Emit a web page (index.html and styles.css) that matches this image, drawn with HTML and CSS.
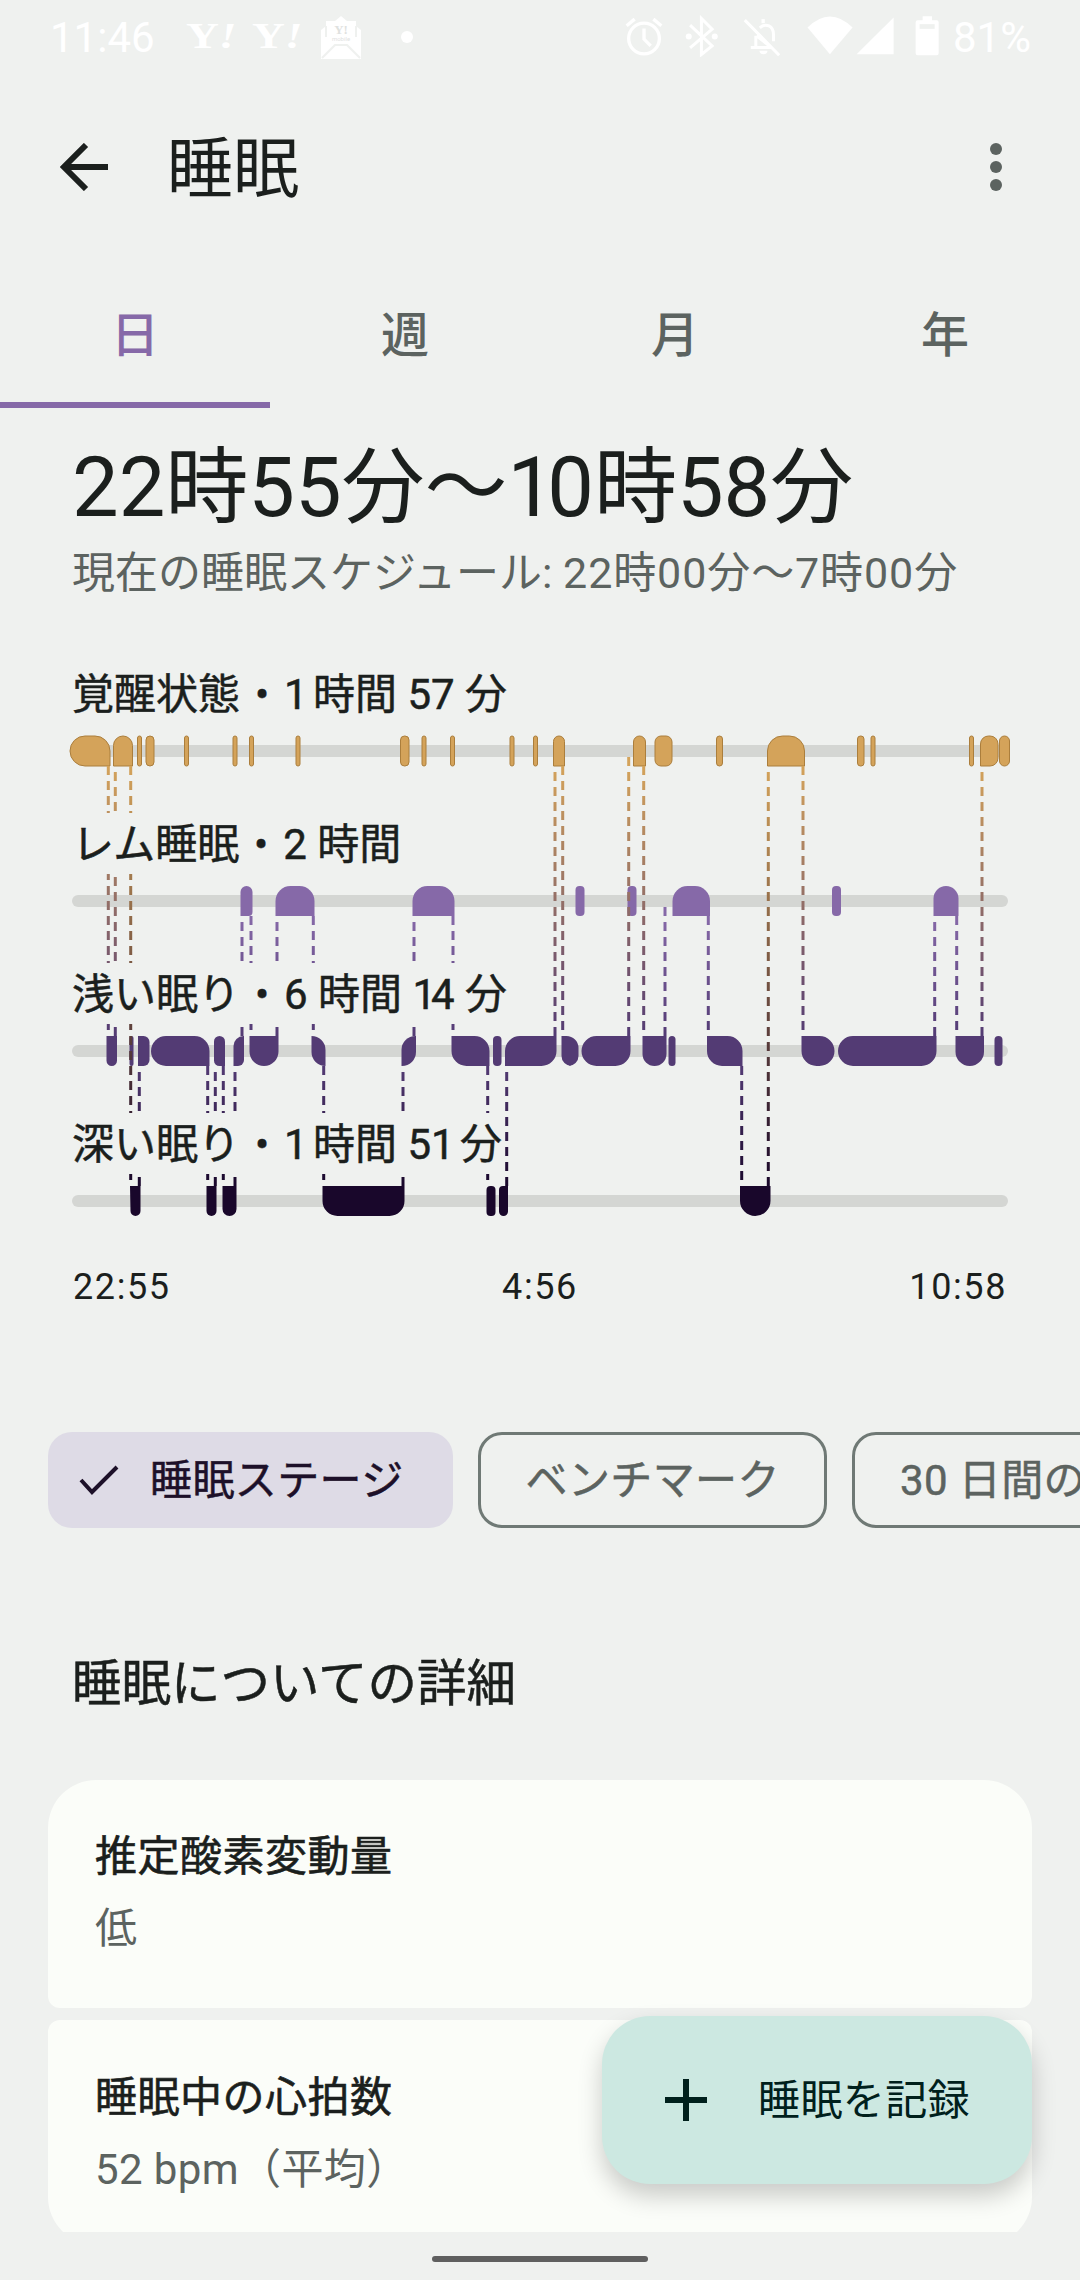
FILE: index.html
```html
<!DOCTYPE html>
<html lang="ja">
<head>
    <meta charset="UTF-8">
    <title>睡眠</title>
    <link rel="stylesheet" href="styles.css">
</head>
<body>
<div class="screen">
    <!-- ステータスバー -->
    <div class="status">
        <span class="time">11:46</span>
        <span class="yahoo">Y<i>!</i></span>
        <span class="yahoo">Y<i>!</i></span>
        <svg class="mail" width="40" height="43" viewBox="0 0 40 43">
            <path d="M0 14L5 10V5H14L20 0L26 5H35V10L40 14V43H0Z" fill="#fff"/>
            <path d="M1 42L14 29H26L39 42M5 10V21M35 10V21" stroke="#eff1ef" stroke-width="2" fill="none"/>
            <text x="20" y="18" text-anchor="middle" class="mail-y">Y!</text>
            <text x="20" y="25" text-anchor="middle" class="mail-m">mobile</text>
        </svg>
        <span class="dot"></span>
        <span class="grow"></span>
        <!-- 座標は 3 倍で取った値 -->
        <svg class="st-icons" width="317" height="42" viewBox="20 30 950 125">
            <g fill="none" stroke="#fff" stroke-width="10">
                <circle cx="80" cy="100" r="46"/>
                <path d="M80 70V102L100 122M28 62L52 42M132 62L108 42"/>
                <path d="M218 60L284 122L252 148V40L284 72L218 128" stroke-width="9"/>
                <path d="M382 45L485 150M400 127H462M415 92V127M427 68C445 52 468 62 468 88V108M417 92L462 127" stroke-width="9"/>
                <path d="M437 42V54"/>
            </g>
            <g fill="#fff">
                <circle cx="214" cy="94" r="9"/>
                <circle cx="292" cy="94" r="9"/>
                <path d="M426 137H450A12 10 0 0 1 426 137Z"/>
                <path d="M570 67Q637 1 705 67L637 147Z"/>
                <path d="M828 37V147H717Z"/>
                <path d="M915 33H943V45H957Q963 45 963 51V144Q963 150 957 150H900Q894 150 894 144V51Q894 45 900 45H915Z"/>
            </g>
            <rect x="906" y="57" width="45" height="14" fill="#eff1ef"/>
        </svg>
        <span class="pct">81%</span>
    </div>

    <!-- アプリバー -->
    <header class="appbar">
        <svg class="back" width="48" height="48" viewBox="0 0 48 48" fill="none" stroke="#1b1f1d" stroke-width="6"><path d="M48 24H5M26 2L4 24l22 22"/></svg>
        <h1>睡眠</h1>
        <div class="more"><i></i><i></i><i></i></div>
    </header>

    <!-- タブ -->
    <nav class="tabs">
        <a class="tab on">日</a>
        <a class="tab">週</a>
        <a class="tab">月</a>
        <a class="tab">年</a>
    </nav>

    <main class="content">
        <h2 class="range">22時55分〜<span class="one-big">1</span>0時58分</h2>
        <p class="sched">現在の睡眠スケジュール: <span class="sched-time">22時00分〜7時00分</span></p>

        <!-- グラフ: svg の座標は画面の座標と同じ (y は 640 から) -->
        <section class="chart">
            <svg class="plot" width="1080" height="600" viewBox="0 640 1080 600">
                <defs>
                    <linearGradient id="awakeLight" gradientUnits="userSpaceOnUse" x1="0" y1="766" x2="0" y2="1036"><stop offset="0" stop-color="#d4a35a"/><stop offset="1" stop-color="#533b74"/></linearGradient>
                    <linearGradient id="awakeDeep" gradientUnits="userSpaceOnUse" x1="0" y1="766" x2="0" y2="1186"><stop offset="0" stop-color="#d4a35a"/><stop offset="1" stop-color="#19072b"/></linearGradient>
                    <linearGradient id="remLight" gradientUnits="userSpaceOnUse" x1="0" y1="916" x2="0" y2="1036"><stop offset="0" stop-color="#8669a8"/><stop offset="1" stop-color="#533b74"/></linearGradient>
                    <linearGradient id="lightDeep" gradientUnits="userSpaceOnUse" x1="0" y1="1066" x2="0" y2="1186"><stop offset="0" stop-color="#533b74"/><stop offset="1" stop-color="#19072b"/></linearGradient>
                </defs>

                <rect class="track" x="72" y="745" width="936" height="12" rx="6"/>
                <rect class="track" x="72" y="895" width="936" height="12" rx="6"/>
                <rect class="track" x="72" y="1045" width="936" height="12" rx="6"/>
                <rect class="track" x="72" y="1195" width="936" height="12" rx="6"/>

                <!-- 覚醒 -->
                <g class="awake">
                    <path d="M85 736H95a15 15 0 0 1 15 15V766H85a15 15 0 0 1 0-30Z"/>
                    <path d="M113.5 766V745.500a9.500 9.500 0 0 1 19 0V766Z"/>
                    <rect x="137.500" y="736" width="4" height="30" rx="2"/>
                    <rect x="146" y="736" width="8" height="30" rx="4"/>
                    <rect x="184.500" y="736" width="4" height="30" rx="2"/>
                    <rect x="233" y="736" width="4" height="30" rx="2"/>
                    <rect x="249.500" y="736" width="4" height="30" rx="2"/>
                    <rect x="296" y="736" width="4" height="30" rx="2"/>
                    <rect x="400.500" y="736" width="8.500" height="30" rx="4"/>
                    <rect x="422" y="736" width="4" height="30" rx="2"/>
                    <rect x="450.500" y="736" width="4" height="30" rx="2"/>
                    <rect x="510" y="736" width="4" height="30" rx="2"/>
                    <rect x="533.500" y="736" width="4" height="30" rx="2"/>
                    <path d="M553.500 766V741.500a5.500 5.500 0 0 1 11 0V766Z"/>
                    <path d="M633.500 766V742a6 6 0 0 1 12 0V766Z"/>
                    <rect x="655" y="736" width="17" height="30" rx="6"/>
                    <rect x="716.500" y="736" width="6" height="30" rx="3"/>
                    <path d="M767.500 766V751a15 15 0 0 1 15-15H789.500a15 15 0 0 1 15 15V766Z"/>
                    <rect x="857.500" y="736" width="6.500" height="30" rx="3"/>
                    <rect x="871" y="736" width="4" height="30" rx="2"/>
                    <rect x="969.500" y="736" width="4" height="30" rx="2"/>
                    <path d="M988.500 736H990a8 8 0 0 1 8 8V758a8 8 0 0 1-8 8H980.500V744a8 8 0 0 1 8-8Z"/>
                    <rect x="999.500" y="736" width="10" height="30" rx="5"/>
                </g>

                <!-- レム -->
                <g class="rem">
                    <path d="M240.500 916V892a6 6 0 0 1 12 0V912a4 4 0 0 1-4 4Z"/>
                    <path d="M275.500 916V901a15 15 0 0 1 15-15H299.500a15 15 0 0 1 15 15V916Z"/>
                    <path d="M412.500 916V901a15 15 0 0 1 15-15H439.500a15 15 0 0 1 15 15V916Z"/>
                    <rect x="575.500" y="886" width="9" height="30" rx="4"/>
                    <rect x="627.500" y="886" width="9" height="30" rx="4"/>
                    <path d="M672.500 916V901a15 15 0 0 1 15-15H695a15 15 0 0 1 15 15V916Z"/>
                    <rect x="832" y="886" width="9" height="30" rx="4"/>
                    <path d="M933.500 916V898.500a12.500 12.500 0 0 1 25 0V916Z"/>
                </g>

                <!-- 浅い -->
                <g class="light">
                    <path d="M106.500 1036H117V1060.750a5.250 5.250 0 0 1-10.500 0Z"/>
                    <rect x="129.500" y="1036" width="4" height="30" rx="2"/>
                    <path d="M138 1036H143.500a6 6 0 0 1 6 6V1060a6 6 0 0 1-6 6H138Z"/>
                    <path d="M166 1036H194.500a15 15 0 0 1 15 15V1066H166a15 15 0 0 1 0-30Z"/>
                    <path d="M214 1041.500a5.500 5.500 0 0 1 11 0V1066H219.500a5.500 5.500 0 0 1-5.500-5.500Z"/>
                    <path d="M243.500 1036H244V1060a6 6 0 0 1-6 6H233.500V1046a10 10 0 0 1 10-10Z"/>
                    <path d="M249.500 1036H278.500V1051.500a14.500 14.500 0 0 1-29 0Z"/>
                    <path d="M311.500 1036a14 14 0 0 1 14 14V1066a14 14 0 0 1-14-14Z"/>
                    <path d="M416 1036V1052a14 14 0 0 1-14 14H401.500V1050a14 14 0 0 1 14-14Z"/>
                    <path d="M451.500 1036H474.500a15 15 0 0 1 15 15V1066H466.500a15 15 0 0 1-15-15Z"/>
                    <rect x="493" y="1036" width="8.500" height="30" rx="4"/>
                    <path d="M520 1036H556.500V1051a15 15 0 0 1-15 15H505V1051a15 15 0 0 1 15-15Z"/>
                    <path d="M561.500 1036H566.500a12 12 0 0 1 12 12V1056a10 10 0 0 1-10 10H571.500a10 10 0 0 1-10-10Z"/>
                    <path d="M596.500 1036H630.500V1051a15 15 0 0 1-15 15H596.500a15 15 0 0 1 0-30Z"/>
                    <path d="M642.500 1036H666.500V1054a12 12 0 0 1-24 0Z"/>
                    <rect x="668.500" y="1036" width="7" height="30" rx="3.500"/>
                    <path d="M707 1036H727.500a15 15 0 0 1 15 15V1066H722a15 15 0 0 1-15-15Z"/>
                    <path d="M801.500 1036H819.500a15 15 0 0 1 0 30H816.500a15 15 0 0 1-15-15Z"/>
                    <path d="M853 1036H936.500V1051a15 15 0 0 1-15 15H853a15 15 0 0 1 0-30Z"/>
                    <path d="M955.500 1036H984V1051.750a14.250 14.250 0 0 1-28.500 0Z"/>
                    <rect x="994.500" y="1036" width="8" height="30" rx="4"/>
                </g>

                <!-- 深い -->
                <g class="deep">
                    <path d="M130 1186H140.500V1211a5 5 0 0 1-10 0Z"/>
                    <path d="M206.500 1186H216.500V1211a5 5 0 0 1-10 0Z"/>
                    <path d="M222.500 1186H236.500V1209a7 7 0 0 1-14 0Z"/>
                    <path d="M322.500 1186H404.500V1201a15 15 0 0 1-15 15H337.500a15 15 0 0 1-15-15Z"/>
                    <rect x="486.500" y="1186" width="9" height="30" rx="4"/>
                    <path d="M503 1186H508V1211.500a4.500 4.500 0 0 1-9 0V1190a4 4 0 0 1 4-4Z"/>
                    <path d="M740 1186H770.500V1200.750a15.250 15.250 0 0 1-30.500 0Z"/>
                </g>

                <!-- 点線 -->
                <g class="drop al">
                    <path d="M108.300 766V1036"/>
                    <path d="M115.300 772V1036"/>
                    <path d="M555 772V1036"/>
                    <path d="M562.700 766V1036"/>
                    <path d="M628.700 757V1036"/>
                    <path d="M643.700 766V1036"/>
                    <path d="M803 766V1036"/>
                    <path d="M982 772V1036"/>
                </g>
                <g class="drop ad">
                    <path d="M130.700 766V1186"/>
                    <path d="M768.300 772V1186"/>
                </g>
                <g class="drop rl">
                    <path d="M242 922V1036"/>
                    <path d="M251 916V1036"/>
                    <path d="M277 922V1036"/>
                    <path d="M313.300 916V1036"/>
                    <path d="M414 922V1036"/>
                    <path d="M453 916V1036"/>
                    <path d="M665 907V1036"/>
                    <path d="M708.300 916V1036"/>
                    <path d="M934.700 922V1036"/>
                    <path d="M956.700 916V1036"/>
                </g>
                <g class="drop ld">
                    <path d="M139.300 1072V1186"/>
                    <path d="M207.700 1066V1186"/>
                    <path d="M215.300 1072V1186"/>
                    <path d="M223.300 1066V1186"/>
                    <path d="M235 1072V1186"/>
                    <path d="M323.700 1066V1186"/>
                    <path d="M403 1072V1186"/>
                    <path d="M487.700 1066V1186"/>
                    <path d="M506.700 1072V1186"/>
                    <path d="M741.700 1066V1186"/>
                </g>
            </svg>

            <div class="row"><span class="label">覚醒状態 <b>•</b> <u>1</u> 時間 57 分</span></div>
            <div class="row"><span class="label">レム睡眠 <b>•</b> 2 時間</span></div>
            <div class="row"><span class="label">浅い眠り <b>•</b> 6 時間 <u>1</u>4 分</span></div>
            <div class="row"><span class="label">深い眠り <b>•</b> <u>1</u> 時間 5<u>1</u> 分</span></div>

            <div class="axis">
                <span>22:55</span>
                <span>4:56</span>
                <span>10:58</span>
            </div>
        </section>

        <div class="chips">
            <div class="chip sel">
                <svg width="40" height="30" viewBox="0 0 40 30" fill="none" stroke="#1d1029" stroke-width="4"><path d="M2 15l11 12L38 2"/></svg>
                <span class="chip-text">睡眠ステージ</span>
            </div>
            <div class="chip"><span class="chip-text">ベンチマーク</span></div>
            <div class="chip"><span class="chip-text">30 日間の平均</span></div>
        </div>

        <h3 class="more-title">睡眠についての詳細</h3>

        <div class="card first">
            <div class="card-name">推定酸素変動量</div>
            <div class="card-val">低</div>
        </div>
        <div class="card">
            <div class="card-name">睡眠中の心拍数</div>
            <div class="card-val">52 bpm（平均）</div>
        </div>
    </main>

    <button class="fab">
        <svg width="44" height="44" viewBox="0 0 44 44" stroke="#00201c" stroke-width="6"><path d="M22 1v42M1 22h42"/></svg>
        <span class="fab-text">睡眠を記録</span>
    </button>

    <div class="home"><span></span></div>
</div>
</body>
</html>
```

FILE: styles.css
```css
* {
    box-sizing: border-box;
}
html, body {
    margin: 0;
    padding: 0;
}
body {
    font-family: "Roboto", "Noto Sans CJK JP", sans-serif;
    color: #1b1f1d;
}
h1, h2, h3, p {
    margin: 0;
    font-weight: 400;
}

.screen {
    position: relative;
    width: 1080px;
    height: 2280px;
    overflow: hidden;
    background-color: #eff1ef;
}

/* ステータスバー */
.status {
    display: flex;
    align-items: center;
    height: 74px;
    padding: 0 49px 0 50px;
    color: #fff;
}
.time {
    width: 103px;
    margin-right: 33px;
    font-size: 42px;
}
.yahoo {
    display: inline-block;
    width: 45px;
    margin-right: 21px;
    font-family: "Liberation Serif", serif;
    font-size: 35px;
    font-weight: 700;
    transform: scaleX(1.3);
    transform-origin: left center;
}
.yahoo i {
    font-style: italic;
}
.mail {
    margin-left: 3px;
    margin-right: 40px;
}
.mail-y {
    font-family: "Liberation Serif", serif;
    font-size: 13px;
    font-weight: 700;
    fill: #dfe2df;
}
.mail-m {
    font-family: "Roboto", sans-serif;
    font-size: 6px;
    fill: #dfe2df;
}
.dot {
    width: 12px;
    height: 12px;
    border-radius: 50%;
    background-color: #fff;
}
.grow {
    flex: 1;
}
.st-icons {
    margin-top: -2px;
}
.pct {
    margin-left: 12px;
    font-size: 42px;
}

/* アプリバー */
.appbar {
    display: flex;
    align-items: center;
    height: 186px;
    padding: 0 78px 0 60px;
}
.appbar h1 {
    flex: 1;
    margin: 0 0 8px 59px;
    font-size: 66px;
}
.more i {
    display: block;
    width: 12px;
    height: 12px;
    margin: 6px 0;
    border-radius: 50%;
    background-color: #5c6360;
}

/* タブ */
.tabs {
    display: flex;
    height: 148px;
}
.tab {
    display: flex;
    flex: 1;
    align-items: center;
    justify-content: center;
    font-size: 48px;
    font-weight: 500;
    color: #5c6360;
    border-bottom: 6px solid transparent;
}
.tab.on {
    color: #8669a8;
    border-bottom-color: #8669a8;
}

/* 内容 */
.content {
    height: 1824px;
    overflow: hidden;
}
.range {
    margin-top: 30px;
    padding-left: 72px;
    font-size: 83px;
    line-height: 100px;
}
/* 元の数字は 1 の幅が狭い */
.one-big {
    letter-spacing: -7px;
}
.sched {
    margin-top: 6px;
    padding-left: 72px;
    font-size: 43px;
    line-height: 58px;
    color: #5c6360;
}
.sched-time {
    letter-spacing: 0.9px;
}

/* グラフ */
.chart {
    position: relative;
    height: 792px;
    margin-top: 38px;
}
.plot {
    position: absolute;
    top: 0;
    left: 0;
}
.track {
    fill: #d4d6d3;
}
.awake {
    fill: #d4a35a;
    stroke: #ab7e3c;
    stroke-width: 1;
}
.rem {
    fill: #8669a8;
}
.light {
    fill: #533b74;
}
.deep {
    fill: #19072b;
}
.drop {
    fill: none;
    stroke-width: 3;
    stroke-dasharray: 9 6;
}
.al { stroke: url(#awakeLight); }
.ad { stroke: url(#awakeDeep); }
.rl { stroke: url(#remLight); }
.ld { stroke: url(#lightDeep); }

.row {
    position: relative;
    height: 150px;
    padding: 23px 0 0 72px;
}
.label {
    display: inline-block;
    height: 61px;
    font-size: 42px;
    line-height: 63px;
    background-color: #eff1ef;
    -webkit-text-stroke: 0.5px #1b1f1d;
}
.label b {
    margin: 0 4.500px;
    font-weight: 400;
}
.label u {
    text-decoration: none;
    letter-spacing: -5px;
}
.axis {
    position: relative;
    display: flex;
    justify-content: space-between;
    margin-top: 25px;
    padding: 0 73px;
    font-size: 36px;
    line-height: 44px;
    letter-spacing: 1.600px;
}

/* チップ */
.chips {
    display: flex;
    gap: 25px;
    width: 1200px;
    padding-left: 48px;
}
.chip {
    display: flex;
    flex: none;
    align-items: center;
    height: 96px;
    padding: 0 44.500px;
    border: 3px solid #6f7975;
    border-radius: 24px;
    font-size: 42px;
    letter-spacing: 0.400px;
    color: #5c6360;
    -webkit-text-stroke: 0.5px #5c6360;
}
.chip-text {
    margin-bottom: 8px;
}
.chip.sel {
    gap: 31px;
    width: 405px;
    padding: 0 0 0 31px;
    border: 0;
    background-color: #dedbe6;
    color: #1d1029;
    -webkit-text-stroke: 0.5px #1d1029;
}

.more-title {
    margin-top: 120px;
    padding: 3px 0 0 72px;
    height: 66px;
    font-size: 49.500px;
    line-height: 66px;
    -webkit-text-stroke: 0.5px #1b1f1d;
}

/* カード */
.card {
    width: 984px;
    height: 225px;
    margin: 12px 0 0 48px;
    padding: 53px 47px 0;
    border-radius: 12px 12px 48px 48px;
    background-color: #fbfdf9;
}
.card.first {
    height: 228px;
    margin-top: 66px;
    padding-top: 52px;
    border-radius: 48px 48px 12px 12px;
}
.card-name {
    font-size: 42px;
    line-height: 50px;
    letter-spacing: 0.500px;
    -webkit-text-stroke: 0.6px #1b1f1d;
}
.card-val {
    margin-top: 22px;
    font-size: 42px;
    line-height: 50px;
    letter-spacing: 0.400px;
    color: #5c6360;
}

.fab {
    position: absolute;
    top: 2016px;
    left: 602px;
    display: flex;
    align-items: center;
    gap: 50px;
    width: 430px;
    height: 168px;
    padding: 0 0 0 62px;
    border: 0;
    border-radius: 48px;
    background-color: #cce8e1;
    box-shadow: 0 12px 24px rgba(0, 0, 0, 0.2);
    font-family: inherit;
    font-size: 42px;
    letter-spacing: 0.400px;
    color: #00201c;
}
.fab-text {
    margin-bottom: 8px;
}

.home {
    display: flex;
    justify-content: center;
    padding-top: 24px;
}
.home span {
    width: 216px;
    height: 6px;
    border-radius: 3px;
    background-color: #5f5f5f;
}
```
